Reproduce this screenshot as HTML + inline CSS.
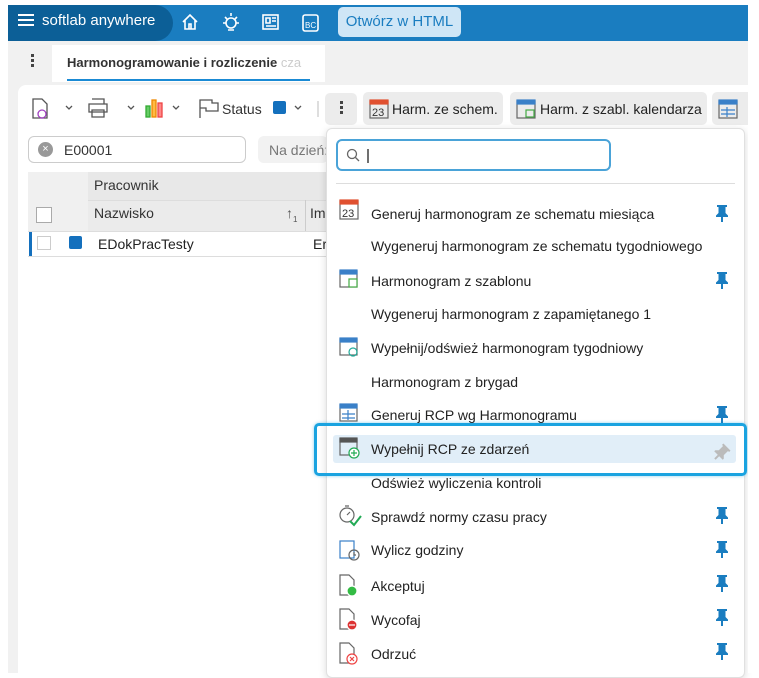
<!DOCTYPE html>
<html><head><meta charset="utf-8"><style>
*{box-sizing:border-box;margin:0;padding:0}
body{width:759px;height:673px;background:#fff;font-family:"Liberation Sans",sans-serif;font-size:14px;color:#222;position:relative;overflow:hidden}
.a{position:absolute}
.it{position:absolute;left:371px;font-size:14px;color:#222;white-space:nowrap}
</style></head><body>
<div class="a" style="left:8px;top:5px;width:740px;height:36px;background:#1a7dc0"></div>
<div class="a" style="left:8px;top:5px;width:165px;height:36px;background:#0c5f97;border-radius:0 18px 18px 0"></div>
<div class="a" style="left:18px;top:14px;width:16px;height:2px;background:#fff;box-shadow:0 5px 0 #fff,0 10px 0 #fff"></div>
<div class="a" style="left:42px;top:12px;color:#fff;font-size:15px">softlab anywhere</div>
<svg class="a" style="left:180px;top:10px" width="150" height="24" fill="none" stroke="#fff" stroke-width="1.6">
<path d="M3 12 L10 5 L17 12 M5 10 V19 H15 V10 M9 19 V14 H11 V19"/>
<circle cx="51" cy="13" r="5"/><path d="M51 3v3M43 13h3M56 13h3M45 7l2 2M57 7l-2 2M48 20h6"/>
<rect x="83" y="5" width="15" height="14"/><path d="M86 8h4v5h-4zM92 8h4M92 11h4M86 16h10"/>
<rect x="123" y="5" width="15" height="16" rx="2"/><text x="125" y="18" fill="#fff" stroke="none" font-size="8" font-family="Liberation Sans">BC</text>
</svg>
<div class="a" style="left:338px;top:7px;width:123px;height:30px;background:#cfe6f6;border-radius:5px;color:#1a7dc0;font-size:15px;text-align:center;line-height:30px">Otwórz w HTML</div>
<div class="a" style="left:8px;top:41px;width:740px;height:632px;background:#f1f1f1"></div>
<div class="a" style="left:31px;top:54px;width:3px;height:3px;background:#444;box-shadow:0 5px 0 #444,0 10px 0 #444"></div>
<div class="a" style="left:52px;top:45px;width:273px;height:37px;background:#fff"></div>
<div class="a" style="left:67px;top:55px;font-size:13px;font-weight:bold;color:#333;white-space:nowrap">Harmonogramowanie i rozliczenie <span style="color:#ccc;font-weight:normal">cza</span></div>
<div class="a" style="left:67px;top:79px;width:243px;height:2px;background:#1a8ad4"></div>
<div class="a" style="left:18px;top:85px;width:730px;height:588px;background:#fff;border-radius:8px 0 0 0"></div>
<svg class="a" style="left:30px;top:96px" width="300" height="26" fill="none" stroke="#555" stroke-width="1.3">
<path d="M3 3h9l5 5v14H3z"/><circle cx="12" cy="18" r="4" stroke="#a040c0"/><path d="M36 10l3 3 3-3M98 10l3 3 3-3M143 10l3 3 3-3M265 10l3 3 3-3"/>
<path d="M62 3h12v5M59 8h18v8H59zM62 14h12v7H62z"/>
<rect x="116" y="10" width="4" height="11" stroke="#3a3" fill="#6c6"/><rect x="122" y="4" width="4" height="17" stroke="#e80" fill="#fb4"/><rect x="128" y="7" width="4" height="14" stroke="#e44" fill="#f88"/>
<path d="M170 22V4h12v3h6v8h-12v-3h-6"/>
<rect x="243" y="5" width="13" height="13" rx="2" fill="#1470bd" stroke="none"/><path d="M288 5v16" stroke="#ccc"/>
</svg>
<div class="a" style="left:222px;top:101px;color:#333">Status</div>
<div class="a" style="left:325px;top:93px;width:32px;height:32px;background:#ececec;border-radius:5px"></div>
<div class="a" style="left:340px;top:101px;width:3px;height:3px;background:#444;box-shadow:0 5px 0 #444,0 10px 0 #444"></div>
<div class="a" style="left:363px;top:92px;width:140px;height:33px;background:#ececec;border-radius:5px"></div>
<div class="a" style="left:510px;top:92px;width:197px;height:33px;background:#ececec;border-radius:5px"></div>
<div class="a" style="left:712px;top:92px;width:36px;height:33px;background:#ececec;border-radius:5px 0 0 5px"></div>
<svg class="a" style="left:369px;top:98px" width="380" height="22" fill="none" stroke="#666" stroke-width="1.2">
<rect x="1" y="3" width="18" height="17"/><rect x="1" y="2" width="18" height="4" fill="#e05030" stroke="#e05030"/><text x="3" y="18" font-size="11" fill="#333" stroke="none" font-family="Liberation Sans">23</text>
<rect x="148" y="3" width="18" height="17"/><rect x="148" y="2" width="18" height="4" fill="#3a80c8" stroke="#3a80c8"/><rect x="157" y="12" width="8" height="7" stroke="#4a4"/>
<rect x="350" y="3" width="18" height="17"/><rect x="350" y="2" width="18" height="4" fill="#3a80c8" stroke="#3a80c8"/><path d="M352 12h14M352 16h14M358 9v10" stroke="#3a80c8"/>
</svg>
<div class="a" style="left:392px;top:101px;color:#222">Harm. ze schem.</div>
<div class="a" style="left:540px;top:101px;color:#222">Harm. z szabl. kalendarza</div>
<div class="a" style="left:28px;top:136px;width:218px;height:27px;border:1px solid #ccc;border-radius:6px"></div>
<div class="a" style="left:38px;top:142px;width:15px;height:15px;border-radius:50%;background:#999;color:#fff;font-size:11px;line-height:15px;text-align:center">×</div>
<div class="a" style="left:64px;top:142px;color:#333">E00001</div>
<div class="a" style="left:258px;top:136px;width:70px;height:27px;background:#f2f2f2;border-radius:6px"></div>
<div class="a" style="left:269px;top:142px;color:#777">Na dzień:</div>
<div class="a" style="left:28px;top:172px;width:300px;height:59px;background:#f0f0f0"></div>
<div class="a" style="left:88px;top:172px;width:240px;height:28px;background:#e8e8e8"></div>
<div class="a" style="left:94px;top:177px;color:#333">Pracownik</div>
<div class="a" style="left:88px;top:200px;width:240px;height:31px;background:#ebebeb;border-top:1px solid #ddd"></div>
<div class="a" style="left:94px;top:205px;color:#333">Nazwisko</div>
<div class="a" style="left:286px;top:205px;color:#555">↑<sub style="font-size:8px">1</sub></div>
<div class="a" style="left:305px;top:200px;width:1px;height:31px;background:#ccc"></div>
<div class="a" style="left:310px;top:205px;color:#333">Im</div>
<div class="a" style="left:36px;top:207px;width:16px;height:16px;border:1px solid #aaa;background:#fff"></div>
<div class="a" style="left:28px;top:231px;width:300px;height:26px;border-bottom:1px solid #ddd;border-top:1px solid #ddd"></div>
<div class="a" style="left:29px;top:232px;width:3px;height:24px;background:#1470bd"></div>
<div class="a" style="left:37px;top:236px;width:14px;height:14px;border:1px solid #ccc"></div>
<div class="a" style="left:69px;top:236px;width:13px;height:13px;background:#1470bd;border-radius:2px"></div>
<div class="a" style="left:98px;top:236px;color:#222">EDokPracTesty</div>
<div class="a" style="left:313px;top:236px;color:#222">Er</div>
<div class="a" style="left:326px;top:128px;width:419px;height:550px;background:#fff;border:1px solid #e0e0e0;border-radius:6px;box-shadow:0 2px 8px rgba(0,0,0,.15)"></div>
<div class="a" style="left:336px;top:139px;width:275px;height:32px;border:2px solid #4aa3d8;border-radius:6px"></div>
<svg class="a" style="left:346px;top:148px" width="30" height="16" fill="none" stroke="#666" stroke-width="1.3"><circle cx="6" cy="6" r="4.5"/><path d="M9.5 9.5L13 13"/><path d="M22 1v14" stroke="#222"/></svg>
<div class="a" style="left:336px;top:183px;width:399px;height:1px;background:#ddd"></div>
<div class="a" style="left:314px;top:423px;width:433px;height:53px;border:3px solid #1aa3e0;border-radius:5px;box-shadow:0 0 3px rgba(26,163,224,.5)"></div>
<div class="a" style="left:333px;top:435px;width:403px;height:28px;background:#e1eef8;border-radius:3px"></div>
<div class="it" style="top:206px">Generuj harmonogram ze schematu miesiąca</div>
<div class="it" style="top:238px">Wygeneruj harmonogram ze schematu tygodniowego</div>
<div class="it" style="top:273px">Harmonogram z szablonu</div>
<div class="it" style="top:306px">Wygeneruj harmonogram z zapamiętanego 1</div>
<div class="it" style="top:340px">Wypełnij/odśwież harmonogram tygodniowy</div>
<div class="it" style="top:374px">Harmonogram z brygad</div>
<div class="it" style="top:407px">Generuj RCP wg Harmonogramu</div>
<div class="it" style="top:441px">Wypełnij RCP ze zdarzeń</div>
<div class="it" style="top:475px">Odśwież wyliczenia kontroli</div>
<div class="it" style="top:509px">Sprawdź normy czasu pracy</div>
<div class="it" style="top:542px">Wylicz godziny</div>
<div class="it" style="top:578px">Akceptuj</div>
<div class="it" style="top:612px">Wycofaj</div>
<div class="it" style="top:646px">Odrzuć</div>
<svg class="a" style="left:336px;top:195px" width="30" height="478" fill="none" stroke="#666" stroke-width="1.2">
<rect x="4" y="6" width="18" height="18"/><rect x="4" y="5" width="18" height="4" fill="#e05030" stroke="#e05030"/><text x="6" y="22" font-size="11" fill="#333" stroke="none" font-family="Liberation Sans">23</text>
<g transform="translate(0,72)"><rect x="4" y="4" width="17" height="16"/><rect x="4" y="3" width="17" height="4" fill="#3a80c8" stroke="#3a80c8"/><rect x="13" y="12" width="8" height="8" stroke="#4a4" fill="#fff"/></g>
<g transform="translate(0,140)"><rect x="4" y="4" width="17" height="16"/><rect x="4" y="3" width="17" height="4" fill="#3a80c8" stroke="#3a80c8"/><circle cx="17" cy="17" r="4" stroke="#2a9"/></g>
<g transform="translate(0,206)"><rect x="4" y="4" width="17" height="16"/><rect x="4" y="3" width="17" height="4" fill="#3a80c8" stroke="#3a80c8"/><path d="M6 13h13M6 17h13M12 9v10" stroke="#3a80c8"/></g>
<g transform="translate(0,240)"><rect x="4" y="4" width="17" height="16"/><rect x="4" y="3" width="17" height="4" fill="#555" stroke="#555"/><circle cx="18" cy="18" r="5" stroke="#2a5" fill="#fff"/><path d="M18 15v6M15 18h6" stroke="#2a5"/></g>
<g transform="translate(0,308)"><circle cx="11" cy="12" r="7"/><path d="M11 12l3-3M9 3h4"/><path d="M14 18l4 4 7-9" stroke="#2a5" stroke-width="2"/></g>
<g transform="translate(0,342)"><rect x="4" y="4" width="14" height="17" stroke="#3a80c8"/><circle cx="18" cy="18" r="5"/><path d="M18 15v3h2"/></g>
<g transform="translate(0,377)"><path d="M4 3h9l5 5v15H4z"/><circle cx="16" cy="19" r="5" fill="#3b4" stroke="#fff"/></g>
<g transform="translate(0,411)"><path d="M4 3h9l5 5v15H4z"/><circle cx="16" cy="19" r="5" fill="#d33" stroke="#fff"/><path d="M13 19h6" stroke="#fff"/></g>
<g transform="translate(0,445)"><path d="M4 3h9l5 5v15H4z"/><circle cx="16" cy="19" r="5" fill="#fff" stroke="#e44"/><path d="M14 17l4 4M18 17l-4 4" stroke="#e44"/></g>
</svg>
<svg class="a" style="left:714px;top:200px" width="20" height="478" fill="#1a7dc0">
<g id="p"><path d="M3 5h10v2h-1.5v6l2.5 2.5v1.5H2v-1.5l2.5-2.5V7H3z"/><path d="M7 16h2v6H7z"/></g>
<use href="#p" y="67"/><use href="#p" y="201"/><use href="#p" y="302"/><use href="#p" y="336"/><use href="#p" y="370"/><use href="#p" y="404"/><use href="#p" y="438"/>
<g transform="translate(8,252) rotate(45) translate(-8,-12)" fill="#bbb"><path d="M3 5h10v2h-1.5v6l2.5 2.5v1.5H2v-1.5l2.5-2.5V7H3z"/><path d="M7 16h2v6H7z"/></g>
</svg>
<div class="a" style="left:748px;top:0;width:11px;height:673px;background:#fff"></div>
</body></html>
